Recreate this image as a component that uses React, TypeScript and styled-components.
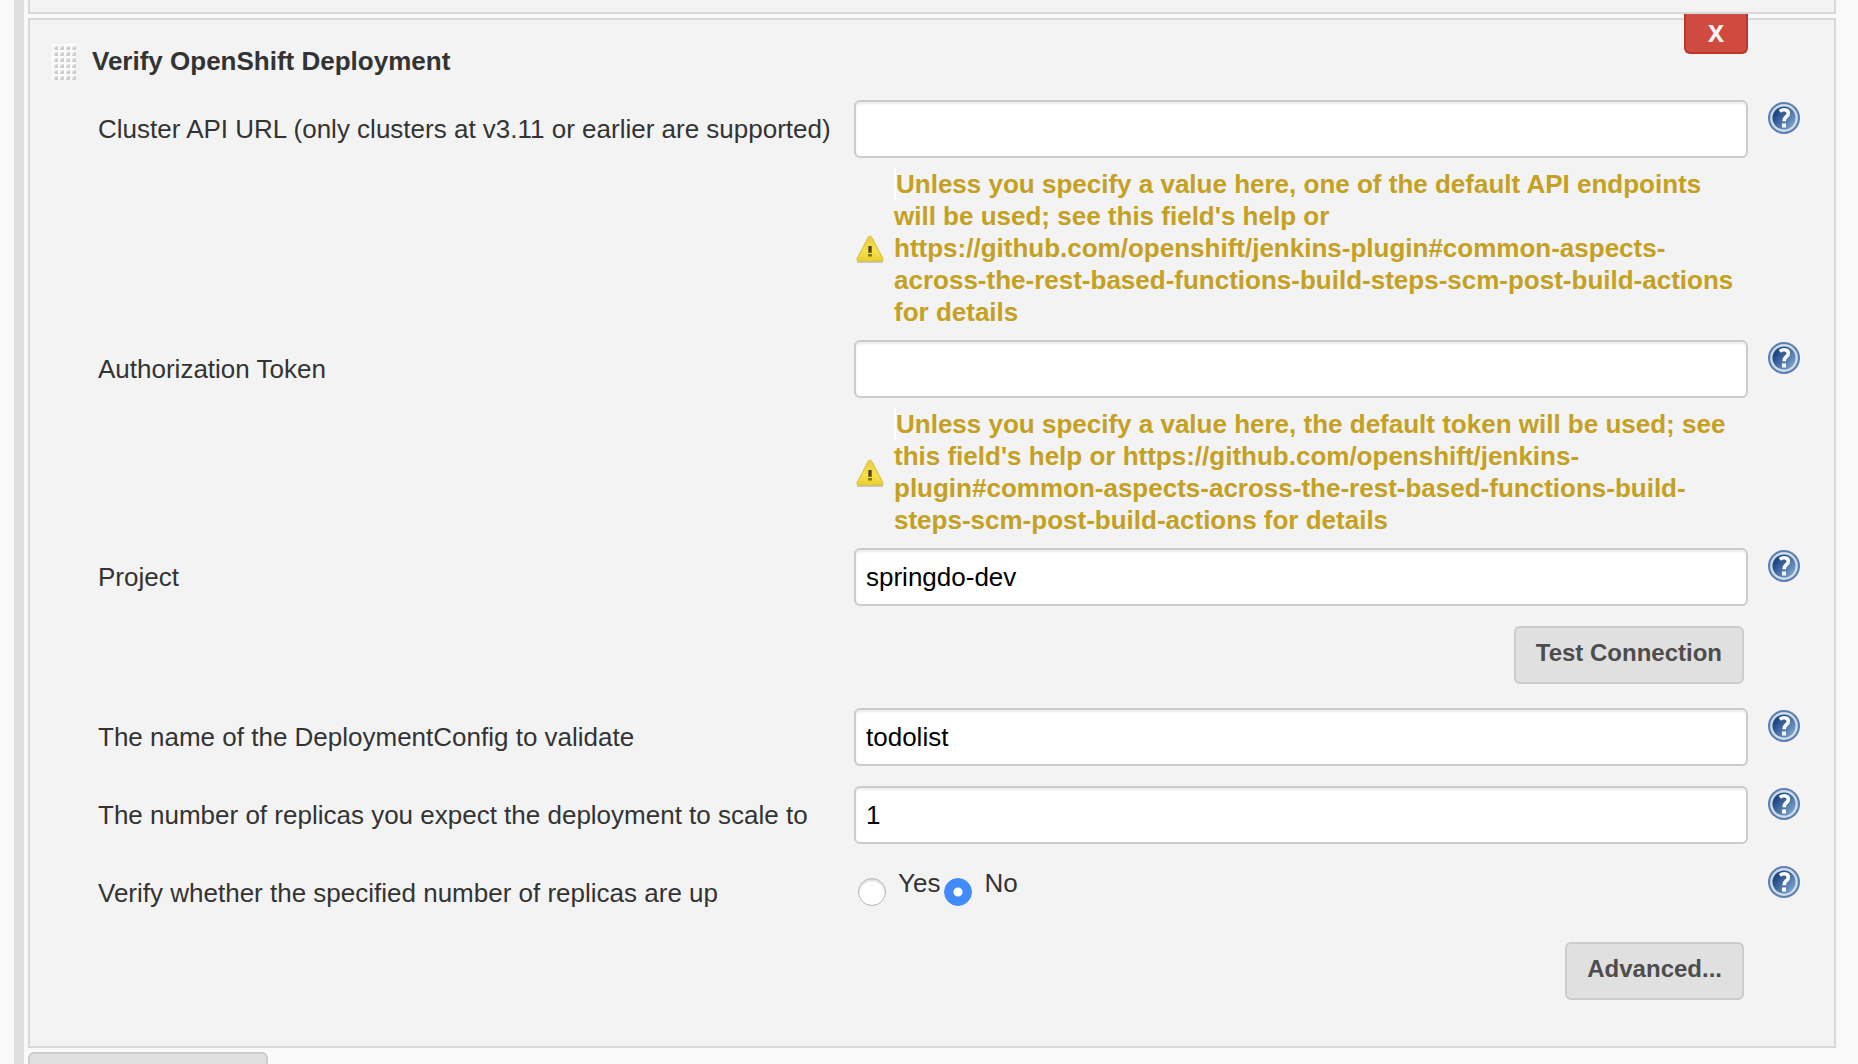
import React, { useId, useState } from "react";
import styled, { createGlobalStyle } from "styled-components";

const GlobalStyle = createGlobalStyle`
  *, *::before, *::after { box-sizing: border-box; }
  body {
    margin: 0;
    background: #f9f9f9;
    color: #333;
    font-family: "Liberation Sans", Helvetica, Arial, sans-serif;
    font-size: 26px;
    line-height: 32px;
  }
`;

const Page = styled.main`
  height: 100vh;
  overflow: hidden;
  padding: 0 22px 0 14px;
`;

const StepList = styled.div`
  display: flex;
  flex-direction: column;
  gap: 4px;
  min-height: 100vh;
  border-left: 10px solid #dfdfdf;
  padding-left: 4px;
`;

const PreviousStep = styled.div`
  height: 14px;
  border: 2px solid #d9d9d9;
  border-top: 0;
  background: #f3f3f3;
`;

const Step = styled.section`
  position: relative;
  display: flex;
  flex-direction: column;
  gap: 20px;
  border: 2px solid #d9d9d9;
  padding: 24px 34px 46px 22px;
  background: #f3f3f3;
`;

const StepHeader = styled.header`
  display: flex;
  gap: 16px;
`;

const Title = styled.h2`
  margin: 0;
  padding-top: 1px;
  font-size: 26px;
  line-height: 32px;
`;

const RemoveButton = styled.button`
  position: absolute;
  top: -6px;
  right: 86px;
  width: 64px;
  height: 40px;
  border: 2px solid #bd362b;
  border-top: 0;
  border-radius: 0 0 6px 6px;
  padding: 0;
  background: #d14a3f;
  color: #f3f3f3;
  font: bold 24px/36px "Noto Sans", sans-serif;
`;

const Form = styled.form`
  display: flex;
  flex-direction: column;
  gap: 20px;
  padding-left: 46px;
`;

const Row = styled.div<{ $tight?: boolean }>`
  display: grid;
  grid-template-columns: 736px minmax(0, 1fr) 32px;
  column-gap: 20px;
  align-items: start;
  margin-bottom: ${(p) => (p.$tight ? "-8px" : "0")};
`;

const FieldLabel = styled.label`
  line-height: 58px;
  white-space: nowrap;
`;

const Setting = styled.div`
  display: flex;
  flex-direction: column;
  gap: 10px;
`;

const TextInput = styled.input`
  width: 100%;
  height: 58px;
  border: 2px solid #ccc;
  border-radius: 6px;
  padding: 0 10px;
  background: #fff;
  box-shadow: inset 0 2px 2px rgba(0, 0, 0, 0.075);
  color: #000;
  font: inherit;
`;

const Warning = styled.p`
  display: flex;
  align-items: center;
  gap: 8px;
  margin: 0;
  color: #c4a023;
  font-weight: bold;

  svg { flex: none; }
`;

const WarningText = styled.span`
  &::before {
    content: "";
    display: inline-block;
    width: 2px;
    height: 32px;
    background: #fff;
    vertical-align: top;
  }
`;

const HelpLink = styled.a`
  display: block;
  width: 32px;
  height: 34px;
  padding-top: 2px;

  svg { display: block; }
`;

const Actions = styled.div<{ $spaced?: boolean }>`
  display: flex;
  justify-content: flex-end;
  padding-right: 56px;
  margin-bottom: ${(p) => (p.$spaced ? "4px" : "0")};
`;

const Button = styled.button`
  height: 58px;
  border: 2px solid #ccc;
  border-radius: 6px;
  padding: 0 20px 4px;
  background: #e0e0e0;
  color: #4d4d4d;
  font: bold 24px/32px "Liberation Sans", Helvetica, Arial, sans-serif;
`;

const AddStepButton = styled(Button)`
  flex: none;
  width: 240px;
`;

const RadioGroup = styled.div`
  display: flex;
  gap: 4px;
  padding: 0 4px;
`;

const RadioOption = styled.label`
  display: flex;
  gap: 12px;
  padding-top: 3px;
`;

const Radio = styled.input`
  appearance: none;
  width: 28px;
  height: 28px;
  margin: 11px 0 0;
  border: 1px solid #b4b4b4;
  border-radius: 50%;
  background: #fff;
  box-shadow: inset 0 2px 2px rgba(0, 0, 0, 0.14);

  &:checked {
    border-color: #428bfa;
    background: radial-gradient(circle, #fff 4px, #428bfa 5px);
    box-shadow: none;
  }
`;

const Grip = () => (
  <svg width="24" height="36" viewBox="0 0 24 36" aria-hidden="true">
    <defs>
      <linearGradient id="grip-dot" x1="0" y1="0" x2="1" y2="1">
        <stop offset="0.1" stopColor="#f4f4f4" />
        <stop offset="0.5" stopColor="#d2d2d2" />
        <stop offset="1" stopColor="#bdbdbd" />
      </linearGradient>
      <pattern id="grip-cells" width="6" height="6" patternUnits="userSpaceOnUse">
        <rect width="6" height="6" fill="#fbfbfb" />
        <rect x="2" y="2" width="4" height="4" rx="1" fill="url(#grip-dot)" />
      </pattern>
    </defs>
    <rect width="24" height="36" fill="url(#grip-cells)" />
  </svg>
);

const WarningIcon = () => (
  <svg width="32" height="32" viewBox="0 0 32 32" aria-hidden="true">
    <defs>
      <linearGradient id="warning-fill" x1="0" y1="0" x2="0" y2="1">
        <stop offset="0" stopColor="#e8d04a" />
        <stop offset="0.6" stopColor="#f6e04c" />
        <stop offset="1" stopColor="#ead02e" />
      </linearGradient>
    </defs>
    <path d="M4 30H28" stroke="#999" strokeOpacity="0.5" strokeWidth="2" strokeLinecap="round" />
    <path
      d="M14.200 5.500Q16 2.800 17.800 5.500L28.700 26.500Q29.700 29 27 29H5Q2.300 29 3.300 26.500Z"
      fill="url(#warning-fill)"
      stroke="#dcc644"
      strokeWidth="1.300"
    />
    <path d="M14 14h4v7h-4zM14 22h4v2.500h-4z" fill="#84762a" />
    <path d="M15 14h2v6h-2z" fill="#4f471c" />
  </svg>
);

const HelpIcon = () => {
  const id = useId();
  return (
    <svg width="32" height="32" viewBox="0 0 32 32" aria-hidden="true">
      <defs>
        <linearGradient id={id} x1="0.1" y1="0.2" x2="0.9" y2="0.9">
          <stop offset="0.15" stopColor="#204a87" />
          <stop offset="1" stopColor="#86aad2" />
        </linearGradient>
      </defs>
      <circle cx="16" cy="16" r="16" fill="#5a80b3" />
      <circle cx="16" cy="16" r="12.700" fill={`url(#${id})`} stroke="#cfdbea" strokeWidth="2.400" />
      <path
        d="M11.800 9.300Q14 7.600 16.300 7.700Q20.400 7.900 20.400 11.200Q20.400 13.200 18 15Q16.200 16.400 16.200 19.200"
        fill="none"
        stroke="#fff"
        strokeWidth="3.600"
      />
      <rect x="14" y="21.500" width="4" height="4" fill="#fff" />
    </svg>
  );
};

const Help = ({ topic }: { topic: string }) => (
  <HelpLink href="#" aria-label={`Help for feature: ${topic}`}>
    <HelpIcon />
  </HelpLink>
);

interface TextFieldProps {
  label: string;
  initial?: string;
  warning?: string;
}

const TextField = ({ label, initial = "", warning }: TextFieldProps) => {
  const id = useId();
  const [value, setValue] = useState(initial);
  return (
    <Row $tight={Boolean(warning)}>
      <FieldLabel htmlFor={id}>{label}</FieldLabel>
      <Setting>
        <TextInput id={id} type="text" value={value} onChange={(e) => setValue(e.target.value)} />
        {warning && (
          <Warning>
            <WarningIcon />
            <WarningText>{warning}</WarningText>
          </Warning>
        )}
      </Setting>
      <Help topic={label} />
    </Row>
  );
};

const VerifyField = () => {
  const id = useId();
  const [choice, setChoice] = useState("No");
  const label = "Verify whether the specified number of replicas are up";
  return (
    <Row>
      <FieldLabel as="span" id={id}>{label}</FieldLabel>
      <Setting>
        <RadioGroup role="radiogroup" aria-labelledby={id}>
          {["Yes", "No"].map((option) => (
            <RadioOption key={option}>
              <Radio
                type="radio"
                name="verify"
                checked={choice === option}
                onChange={() => setChoice(option)}
              />
              {option}
            </RadioOption>
          ))}
        </RadioGroup>
      </Setting>
      <Help topic={label} />
    </Row>
  );
};

export default function App() {
  return (
    <>
      <GlobalStyle />
      <Page>
        <StepList>
          <PreviousStep />
          <Step>
            <StepHeader>
              <Grip />
              <Title>Verify OpenShift Deployment</Title>
            </StepHeader>
            <RemoveButton type="button" aria-label="Remove step">X</RemoveButton>
            <Form onSubmit={(e) => e.preventDefault()}>
              <TextField
                label="Cluster API URL (only clusters at v3.11 or earlier are supported)"
                warning="Unless you specify a value here, one of the default API endpoints will be used; see this field's help or https://github.com/openshift/jenkins-plugin#common-aspects-across-the-rest-based-functions-build-steps-scm-post-build-actions for details"
              />
              <TextField
                label="Authorization Token"
                warning="Unless you specify a value here, the default token will be used; see this field's help or https://github.com/openshift/jenkins-plugin#common-aspects-across-the-rest-based-functions-build-steps-scm-post-build-actions for details"
              />
              <TextField label="Project" initial="springdo-dev" />
              <Actions $spaced>
                <Button type="button">Test Connection</Button>
              </Actions>
              <TextField label="The name of the DeploymentConfig to validate" initial="todolist" />
              <TextField label="The number of replicas you expect the deployment to scale to" initial="1" />
              <VerifyField />
              <Actions>
                <Button type="button">Advanced...</Button>
              </Actions>
            </Form>
          </Step>
          <AddStepButton type="button" aria-label="Add build step" />
        </StepList>
      </Page>
    </>
  );
}
